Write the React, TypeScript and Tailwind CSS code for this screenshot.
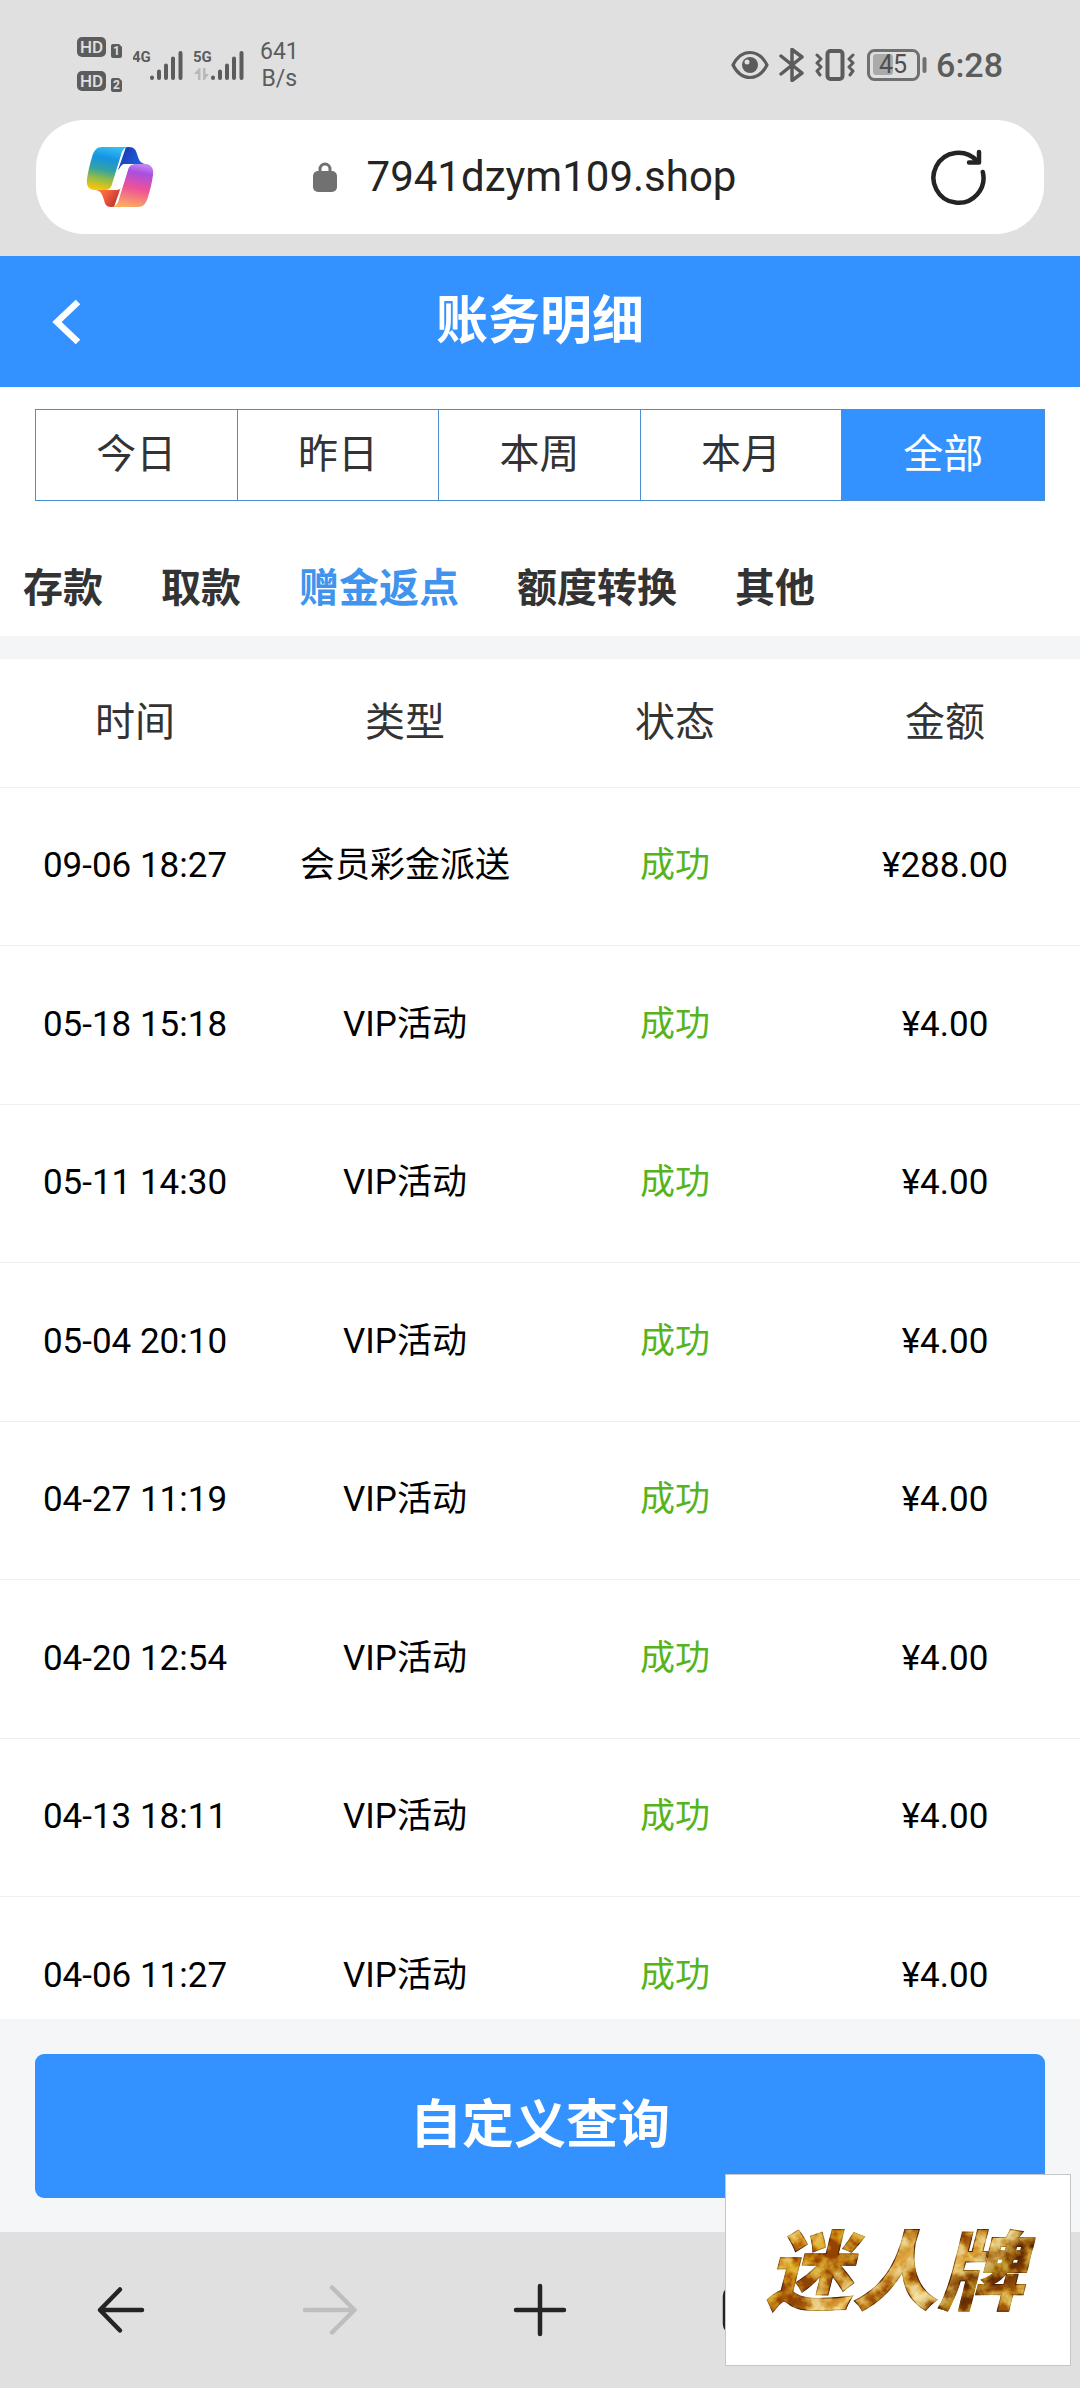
import { useState } from 'react';

const ranges = ['今日', '昨日', '本周', '本月', '全部'];
const categories = ['存款', '取款', '赠金返点', '额度转换', '其他'];
const columns = ['时间', '类型', '状态', '金额'];

const records = [
  { time: '09-06 18:27', type: '会员彩金派送', status: '成功', amount: '¥288.00' },
  { time: '05-18 15:18', type: 'VIP活动', status: '成功', amount: '¥4.00' },
  { time: '05-11 14:30', type: 'VIP活动', status: '成功', amount: '¥4.00' },
  { time: '05-04 20:10', type: 'VIP活动', status: '成功', amount: '¥4.00' },
  { time: '04-27 11:19', type: 'VIP活动', status: '成功', amount: '¥4.00' },
  { time: '04-20 12:54', type: 'VIP活动', status: '成功', amount: '¥4.00' },
  { time: '04-13 18:11', type: 'VIP活动', status: '成功', amount: '¥4.00' },
  { time: '04-06 11:27', type: 'VIP活动', status: '成功', amount: '¥4.00' },
];

function HdBadge({ sim }: { sim: string }) {
  return (
    <svg width="46" height="22" viewBox="0 0 46 22" className="block">
      <rect x="0" y="0" width="29" height="20" rx="5" fill="#5c5c5c" />
      <text x="14.5" y="16" textAnchor="middle" fontSize="17" fontWeight="500" fill="#e0e0e0">HD</text>
      <path d="M36 7h6l3 3v9a2 2 0 0 1-2 2h-7a2 2 0 0 1-2-2V9a2 2 0 0 1 2-2z" fill="#5c5c5c" />
      <text x="39.5" y="18" textAnchor="middle" fontSize="12" fontWeight="700" fill="#e0e0e0">{sim}</text>
    </svg>
  );
}

function Signal({ label, arrows }: { label: string; arrows?: boolean }) {
  return (
    <svg width="51" height="34" viewBox="0 0 51 34" className="block">
      <text x="-1" y="14" fontSize="15" fontWeight="700" fill="#5c5c5c">{label}</text>
      {arrows && (
        <path d="M0 26l5-6h1.500v12H4v-6zM9 20h2.500v6H15l-4.500 6H9z" fill="#b9b9b9" />
      )}
      <g stroke="#5c5c5c" strokeWidth="4" strokeLinecap="round">
        <path d="M19 29.500v0.500M26 23.500v6.500M33 17.500v12.500M40 10.500v19.500M47.500 5v25" />
      </g>
    </svg>
  );
}

function StatusBar() {
  return (
    <div className="flex h-[120px] items-center justify-between px-[77px] pt-[10px] text-[#5c5c5c]">
      <div className="flex items-center">
        <div className="flex flex-col gap-3">
          <HdBadge sim="1" />
          <HdBadge sim="2" />
        </div>
        <div className="ml-[10px] flex gap-[10px]">
          <Signal label="4G" />
          <Signal label="5G" arrows />
        </div>
        <div className="ml-[15px] text-center text-[23px] leading-[27px]">
          641
          <br />
          B/s
        </div>
      </div>

      <div className="flex items-center">
        <svg width="38" height="32" viewBox="0 0 38 32" className="block">
          <path d="M2 16C6 8 12 3.500 19 3.500S32 8 36 16c-4 8-10 12.500-17 12.500S6 24 2 16z" fill="none" stroke="#5c5c5c" strokeWidth="3.200" strokeLinejoin="round" />
          <circle cx="19" cy="16" r="8" fill="#5c5c5c" />
          <circle cx="16" cy="13" r="2.500" fill="#e0e0e0" />
        </svg>
        <svg width="26" height="34" viewBox="0 0 26 34" className="ml-[10px] block">
          <path d="M2 8l21 17-10 7.500V1.500L23 9 2 26" fill="none" stroke="#5c5c5c" strokeWidth="3.500" strokeLinejoin="round" strokeLinecap="round" />
        </svg>
        <svg width="40" height="34" viewBox="0 0 40 34" className="ml-[10px] block">
          <rect x="12.500" y="3" width="15" height="28" rx="3" fill="none" stroke="#5c5c5c" strokeWidth="4" />
          <path d="M2 7l4 4-4 4 4 4-4 4 3 4M38 7l-4 4 4 4-4 4 4 4-3 4" fill="none" stroke="#5c5c5c" strokeWidth="3" strokeLinejoin="round" strokeLinecap="round" />
        </svg>
        <svg width="61" height="34" viewBox="0 0 61 34" className="ml-3 block">
          <rect x="1.500" y="2.500" width="50" height="29" rx="6" fill="none" stroke="#707070" strokeWidth="3" />
          <rect x="6" y="6" width="20" height="21" rx="3" fill="#aaaaaa" />
          <text x="26" y="25" textAnchor="middle" fontSize="25" fill="#4f4f4f">45</text>
          <path d="M57.500 11v12" stroke="#707070" strokeWidth="4" strokeLinecap="round" />
        </svg>
        <span className="ml-2 text-[34px] leading-[34px] font-medium">6:28</span>
      </div>
    </div>
  );
}

function CopilotLogo() {
  return (
    <svg width="68" height="62" viewBox="0 0 68 62" className="block">
      <defs>
        <linearGradient id="cpLeft" x1="0.600" y1="0" x2="0.400" y2="1">
          <stop offset="0" stopColor="#35bdf0" />
          <stop offset="0.280" stopColor="#1593e2" />
          <stop offset="0.550" stopColor="#35a3a0" />
          <stop offset="0.750" stopColor="#8fbb4a" />
          <stop offset="1" stopColor="#f5c60b" />
        </linearGradient>
        <linearGradient id="cpTop" x1="0" y1="0.300" x2="1" y2="1">
          <stop offset="0" stopColor="#1a38b5" />
          <stop offset="1" stopColor="#1f6fe8" />
        </linearGradient>
        <linearGradient id="cpRight" x1="0.600" y1="0" x2="0.400" y2="1">
          <stop offset="0" stopColor="#c084f2" />
          <stop offset="0.180" stopColor="#a94fe0" />
          <stop offset="0.550" stopColor="#ee5296" />
          <stop offset="1" stopColor="#fdac60" />
        </linearGradient>
        <linearGradient id="cpBottom" x1="0" y1="0" x2="1" y2="0.600">
          <stop offset="0" stopColor="#fb8a3c" />
          <stop offset="0.500" stopColor="#f4603e" />
          <stop offset="1" stopColor="#b8322f" />
        </linearGradient>
      </defs>
      {/* folds behind the two ribbons */}
      <path d="M40 1h3c5 0 7 3 8 7 2 6 3 9 8 10H38l-6 6z" fill="url(#cpTop)" />
      <path d="M28 61h-3c-5 0-6-3-7-7-2-6-3-9-8-10h20l6-6z" fill="url(#cpBottom)" />
      <path d="M16 1h27c-5 0-7 4-8 8l-9 29c-1 4-3 6-8 6H9c-6 0-9-4-8-11 1-8 3-15 5-22C8 4 11 1 16 1z" fill="url(#cpLeft)" />
      <path d="M52 61H25c5 0 7-4 8-8l9-29c1-4 3-6 8-6h9c6 0 9 4 8 11-1 8-3 15-5 22-2 7-5 10-10 10z" fill="url(#cpRight)" />
      <path d="M24 44c4-2 5-6 7-13s3-13 8-13h9c-5 1-6 4-7 8-2 6-3 11-5 14-1 3-3 4-6 4z" fill="#fff" />
    </svg>
  );
}

function AddressBar() {
  return (
    <div className="mx-9 mb-[22px] flex h-[114px] items-center justify-between rounded-[48px] bg-white pr-[58px] pl-[50px]">
      <button type="button" aria-label="Copilot">
        <CopilotLogo />
      </button>
      <div className="flex items-center gap-[29px] pr-9">
        <svg width="26" height="32" viewBox="0 0 26 32" className="block">
          <path d="M8 12V8a5 5 0 0 1 10 0v4" fill="none" stroke="#717171" strokeWidth="3" />
          <rect x="1" y="10" width="24" height="21" rx="5" fill="#717171" />
        </svg>
        <span className="text-[42px] leading-[50px] text-[#242424]">7941dzym109.shop</span>
      </div>
      <button type="button" aria-label="刷新">
        <svg width="56" height="58" viewBox="0 0 56 58" className="block" fill="none" stroke="#242424" strokeWidth="4.500" strokeLinecap="round" strokeLinejoin="round">
          <path d="M52.800 24A25 25 0 1 1 47 13" />
          <path d="M49 4v10.500H39" />
        </svg>
      </button>
    </div>
  );
}

// Gold lettering with a mottled, foil-like grain
function BrandLogo() {
  return (
    <svg viewBox="0 0 344 190" className="block h-full w-full" role="img" aria-label="迷人牌">
      <defs>
        <linearGradient id="gold" x1="0" y1="0" x2="1" y2="0.500">
          <stop offset="0" stopColor="#a8700f" />
          <stop offset="0.150" stopColor="#e0ad45" />
          <stop offset="0.250" stopColor="#c4820f" />
          <stop offset="0.400" stopColor="#bd8420" />
          <stop offset="0.550" stopColor="#f0d083" />
          <stop offset="0.630" stopColor="#b87a18" />
          <stop offset="0.740" stopColor="#ecca74" />
          <stop offset="0.860" stopColor="#8f5a0b" />
          <stop offset="1" stopColor="#c8942f" />
        </linearGradient>
        <filter id="foil" x="0" y="0" width="1" height="1" colorInterpolationFilters="sRGB">
          <feTurbulence type="fractalNoise" baseFrequency="0.060" numOctaves="4" seed="7" result="noise" />
          <feColorMatrix in="noise" type="matrix" values="3 0 0 0 -1  3 0 0 0 -1.050  3 0 0 0 -1.100  0 0 0 0 1" result="tone" />
          <feBlend in="tone" in2="SourceGraphic" mode="soft-light" result="mix" />
          <feComposite in="mix" in2="SourceAlpha" operator="in" />
        </filter>
      </defs>
      <text
        x="169"
        y="128"
        textAnchor="middle"
        fontSize="86"
        fontWeight="900"
        fontStyle="italic"
        fill="url(#gold)"
        stroke="#8c5a10"
        strokeWidth="1"
        filter="url(#foil)"
      >
        迷人牌
      </text>
    </svg>
  );
}

function BrowserNav() {
  return (
    <nav className="grid h-[156px] shrink-0 grid-cols-5 items-center justify-items-center bg-[#e0e0e0] px-[15px] text-[#242424]">
      <button type="button" aria-label="后退">
        <svg width="56" height="56" viewBox="0 0 56 56" className="block" fill="none" stroke="currentColor" strokeWidth="4.500" strokeLinecap="round" strokeLinejoin="round">
          <path d="M28 7.500L8 28l20 20.500M8 28h42" />
        </svg>
      </button>
      <button type="button" aria-label="前进" className="text-[#bebebe]">
        <svg width="56" height="56" viewBox="0 0 56 56" className="block" fill="none" stroke="currentColor" strokeWidth="4.500" strokeLinecap="round" strokeLinejoin="round">
          <path d="M30 5.500L52.500 28 30 50.500M52.500 28H3" />
        </svg>
      </button>
      <button type="button" aria-label="新标签页">
        <svg width="56" height="56" viewBox="0 0 56 56" className="block" fill="none" stroke="currentColor" strokeWidth="4.500" strokeLinecap="round">
          <path d="M28 4v48M4 28h48" />
        </svg>
      </button>
      <button type="button" aria-label="标签页">
        <svg width="56" height="56" viewBox="0 0 56 56" className="block" fill="none" stroke="currentColor" strokeWidth="4.500">
          <rect x="3" y="6" width="50" height="44" rx="8" />
        </svg>
      </button>
      <button type="button" aria-label="菜单">
        <svg width="56" height="56" viewBox="0 0 56 56" className="block" fill="none" stroke="currentColor" strokeWidth="4.500" strokeLinecap="round">
          <path d="M8 14h40M8 28h40M8 42h40" />
        </svg>
      </button>
    </nav>
  );
}

export default function App() {
  const [range, setRange] = useState('全部');
  const [category, setCategory] = useState('赠金返点');

  return (
    <div className="relative flex h-screen flex-col overflow-hidden bg-white font-[Roboto,'Noto_Sans_CJK_SC',sans-serif] text-[#333333]">
      <div className="shrink-0 bg-[#e0e0e0]">
        <StatusBar />
        <AddressBar />
      </div>

      {/* Page title */}
      <header className="grid h-[131px] shrink-0 grid-cols-[1fr_auto_1fr] items-center bg-[#3392ff] px-[50px] text-white">
        <button type="button" aria-label="返回" className="justify-self-start">
          <svg width="32" height="48" viewBox="0 0 32 48" className="block">
            <path d="M28 4L7 24l21 20" fill="none" stroke="currentColor" strokeWidth="6.500" />
          </svg>
        </button>
        <h1 className="text-[52px] leading-[64px] font-bold">账务明细</h1>
      </header>

      {/* Date range */}
      <div className="mx-[35px] mt-[22px] grid h-[92px] shrink-0 grid-cols-5 border border-[#4a90d0]">
        {ranges.map((r) => (
          <button
            key={r}
            type="button"
            onClick={() => setRange(r)}
            className={`border-r border-[#4a90d0] text-[40px] leading-[48px] last:border-r-0 ${
              r === range ? 'bg-[#3392ff] text-white' : ''
            }`}
          >
            {r}
          </button>
        ))}
      </div>

      {/* Categories */}
      <div className="flex h-[135px] shrink-0 items-center gap-[58px] pt-10 pl-[23px]">
        {categories.map((c) => (
          <button
            key={c}
            type="button"
            onClick={() => setCategory(c)}
            className={`text-[40px] leading-[48px] font-bold whitespace-nowrap ${c === category ? 'text-[#4094ee]' : ''}`}
          >
            {c}
          </button>
        ))}
      </div>

      <div className="h-[23px] shrink-0 bg-[#f4f5f7]" />

      {/* Records */}
      <div className="min-h-0 flex-1 overflow-hidden">
        <table className="w-full table-fixed border-collapse text-center">
          <thead>
            <tr className="h-[128px] border-b border-[#f0f0f0]">
              {columns.map((c) => (
                <th key={c} scope="col" className="p-0 text-[40px] leading-[48px] font-normal">
                  {c}
                </th>
              ))}
            </tr>
          </thead>
          <tbody className="text-[35px] leading-[42px] text-black">
            {records.map((r) => (
              <tr key={r.time} className="h-[158px] border-b border-[#f0f0f0] even:h-[159px]">
                <td className="p-0">{r.time}</td>
                <td className="p-0">{r.type}</td>
                <td className="p-0 text-[#55b41e]">{r.status}</td>
                <td className="p-0">{r.amount}</td>
              </tr>
            ))}
          </tbody>
        </table>
      </div>

      <div className="flex h-[213px] shrink-0 items-center bg-[#f4f6f8] px-[35px]">
        <button type="button" className="h-36 w-full rounded-[9px] bg-[#3392ff] text-[52px] leading-[64px] font-bold text-white">
          自定义查询
        </button>
      </div>

      <BrowserNav />

      <div className="absolute right-[9px] bottom-[22px] h-[192px] w-[346px] border border-[#c6c6c6] bg-white">
        <BrandLogo />
      </div>
    </div>
  );
}
